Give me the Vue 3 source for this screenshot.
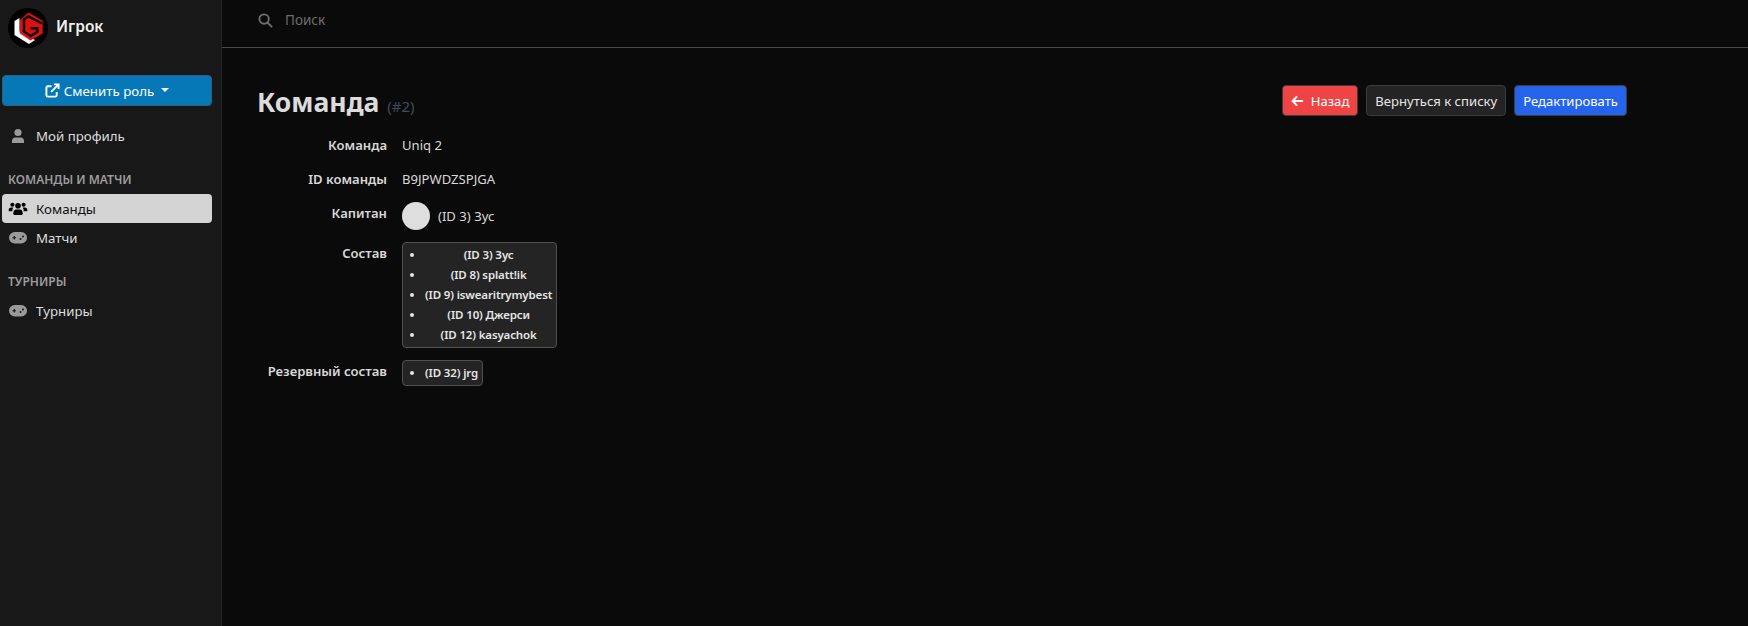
<script setup>
const rows = [
  { id: 3, name: 'Зус' },
  { id: 8, name: 'splatt!ik' },
  { id: 9, name: 'iswearitrymybest' },
  { id: 10, name: 'Джерси' },
  { id: 12, name: 'kasyachok' }
]
const reserve = [{ id: 32, name: 'jrg' }]
</script>

<template>
  <div class="page">
    <aside class="sidebar">
      <div class="brand">
        <svg class="logo" viewBox="0 0 40 40" width="40" height="40">
          <circle cx="20" cy="20" r="20" fill="#000" />
          <path d="M11.500 10 L6.500 13 V27 L21 36 L27 32 L11.500 23.500 Z" fill="#fff" />
          <path d="M20.500 4.500 L34.700 12.700 V25.500 L22.500 32.500 L12 25.500 V12 Z" fill="#e01010" />
          <path d="M34 15.500 L20.500 8.500 L16 11.300 V23.700 L22.700 28 L29.500 23.700 V20.300 L22.500 20.300" fill="none" stroke="#000" stroke-width="2.400" />
        </svg>
        <span class="brand-name">Игрок</span>
      </div>
      <button class="role-btn">
        <svg viewBox="0 0 16 16" width="15" height="15" fill="none" stroke="#fff" stroke-width="2">
          <path d="M12.500 9.500 V13 a1.500 1.500 0 0 1 -1.500 1.500 H3 A1.500 1.500 0 0 1 1.500 13 V5 A1.500 1.500 0 0 1 3 3.500 H7" />
          <path d="M6.500 9.500 L14 2 M9.500 1.500 H14.500 V6.500" />
        </svg>
        <span>Сменить роль</span>
        <i class="caret"></i>
      </button>
      <a class="nav-item">
        <svg class="nav-icon" viewBox="0 0 16 16" width="16" height="16" fill="#9a9a9a">
          <circle cx="8" cy="4.500" r="3.600" />
          <path d="M2 15 V12.500 A3.500 3.500 0 0 1 5.500 9.500 H10.500 A3.500 3.500 0 0 1 14 12.500 V15 Z" />
        </svg>
        Мой профиль
      </a>
      <div class="section">Команды и матчи</div>
      <a class="nav-item active">
        <svg class="nav-icon" viewBox="0 0 20 16" width="18" height="15" fill="#000">
          <circle cx="4" cy="4" r="2.200" />
          <circle cx="16" cy="4" r="2.200" />
          <circle cx="10" cy="5" r="3" />
          <path d="M0 10 Q0 7 3 7 H5 Q3.500 9 4 11 H1 Q0 11 0 10 Z" />
          <path d="M20 10 Q20 7 17 7 H15 Q16.500 9 16 11 H19 Q20 11 20 10 Z" />
          <path d="M5 13.500 Q5 9 8 9 H12 Q15 9 15 13.500 Q15 15 13.500 15 H6.500 Q5 15 5 13.500 Z" />
        </svg>
        Команды
      </a>
      <a class="nav-item">
        <svg class="nav-icon" viewBox="0 0 18 12" width="18" height="12">
          <rect width="18" height="11.500" rx="5.700" fill="#9a9a9a" />
          <path d="M3.500 5.750 H7 M5.250 4 V7.500" stroke="#181818" stroke-width="1.200" />
          <circle cx="11.500" cy="7" r="1" fill="#181818" />
          <circle cx="14" cy="4.500" r="1" fill="#181818" />
        </svg>
        Матчи
      </a>
      <div class="section section-second">Турниры</div>
      <a class="nav-item">
        <svg class="nav-icon" viewBox="0 0 18 12" width="18" height="12">
          <rect width="18" height="11.500" rx="5.700" fill="#9a9a9a" />
          <path d="M3.500 5.750 H7 M5.250 4 V7.500" stroke="#181818" stroke-width="1.200" />
          <circle cx="11.500" cy="7" r="1" fill="#181818" />
          <circle cx="14" cy="4.500" r="1" fill="#181818" />
        </svg>
        Турниры
      </a>
    </aside>

    <main class="main">
      <header class="topbar">
        <svg viewBox="0 0 16 16" width="15" height="15" fill="none" stroke="#6f6f6f" stroke-width="2">
          <circle cx="6.500" cy="6.500" r="5" />
          <path d="M10.200 10.200 L15 15" />
        </svg>
        <span class="search">Поиск</span>
      </header>

      <div class="content">
        <div class="head">
          <h1>Команда <small>(#2)</small></h1>
          <div class="actions">
            <button class="btn red">
              <svg viewBox="0 0 14 12" width="13" height="12" fill="none" stroke="#fff" stroke-width="2.200">
                <path d="M13 6 H2 M6.500 1 L1.800 6 L6.500 11" />
              </svg>
              Назад
            </button>
            <button class="btn dark">Вернуться к списку</button>
            <button class="btn blue">Редактировать</button>
          </div>
        </div>

        <dl class="details">
          <dt>Команда</dt>
          <dd>Uniq 2</dd>
          <dt>ID команды</dt>
          <dd>B9JPWDZSPJGA</dd>
          <dt>Капитан</dt>
          <dd class="captain"><span class="avatar"></span>(ID 3) Зус</dd>
          <dt>Состав</dt>
          <dd>
            <ul class="players">
              <li v-for="p in rows" :key="p.id">(ID {{ p.id }}) {{ p.name }}</li>
            </ul>
          </dd>
          <dt>Резервный состав</dt>
          <dd>
            <ul class="players">
              <li v-for="p in reserve" :key="p.id">(ID {{ p.id }}) {{ p.name }}</li>
            </ul>
          </dd>
        </dl>
      </div>
    </main>
  </div>
</template>

<style>
body {
  background: #0a0a0a;
}
</style>

<style scoped>
.page {
  display: flex;
  height: 626px;
  overflow: hidden;
  font-family: "Noto Sans", "Open Sans", sans-serif;
  font-size: 13.300px;
  color: #e0e0e0;
  background: #0a0a0a;
}
.sidebar {
  width: 222px;
  flex-shrink: 0;
  padding: 0 9px 0 2px;
  box-sizing: border-box;
  background: #181818;
  border-right: 1px solid #262626;
}
.brand {
  display: flex;
  align-items: center;
  gap: 8px;
  height: 56px;
  padding-left: 6px;
}
.brand-name {
  margin-bottom: 4px;
  font-size: 15.500px;
  font-weight: 600;
  color: #f0f0f0;
}
.role-btn {
  display: flex;
  align-items: center;
  justify-content: center;
  gap: 4px;
  width: 100%;
  height: 31px;
  margin-top: 19px;
  padding: 0;
  font: inherit;
  color: #fff;
  background: #0678b8;
  border: 1px solid #2a6080;
  border-radius: 4px;
}
.caret {
  width: 0;
  height: 0;
  margin-left: 3px;
  margin-bottom: 2px;
  border-left: 4px solid transparent;
  border-right: 4px solid transparent;
  border-top: 4px solid #fff;
}
.nav-item {
  display: flex;
  align-items: center;
  height: 29px;
  padding-left: 6px;
  border-radius: 4px;
  color: #dedede;
}
.nav-item:first-of-type {
  margin-top: 15px;
}
.nav-icon {
  width: 20px;
  margin-right: 8px;
}
.active {
  background: #d4d4d4;
  color: #111;
}
.section {
  margin-top: 22px;
  margin-bottom: 6px;
  padding-left: 6px;
  font-size: 12px;
  font-weight: 600;
  line-height: 16px;
  text-transform: uppercase;
  color: #9c9c9c;
}
.section-second {
  margin-top: 22px;
  margin-bottom: 6px;
}
.main {
  flex: 1;
  min-width: 0;
}
.topbar {
  display: flex;
  align-items: center;
  gap: 12px;
  height: 48px;
  padding: 0 0 7px 36px;
  box-sizing: border-box;
  border-bottom: 1px solid #4a4a4a;
}
.search {
  font-size: 13.500px;
  color: #6d6d6d;
}
.content {
  width: 1370px;
  margin-left: 35px;
}
.head {
  display: flex;
  justify-content: space-between;
  align-items: flex-start;
  padding-top: 37px;
}
h1 {
  margin: -2px 0 0;
  font-size: 26.500px;
  line-height: 38px;
  font-weight: 700;
  color: #dcdcdc;
}
h1 small {
  margin-left: 1px;
  font-size: 15px;
  font-weight: 400;
  color: #3f4a5c;
}
.actions {
  display: flex;
  gap: 8px;
}
.btn {
  display: flex;
  align-items: center;
  gap: 7px;
  height: 31px;
  padding: 0 8px;
  font: inherit;
  font-size: 13.100px;
  color: #fff;
  border: 1px solid #3c3c3c;
  border-radius: 4px;
}
.red { background: #f04444; }
.dark { background: #242424; color: #e6e6e6; }
.blue { background: #2563eb; }
.details {
  display: grid;
  grid-template-columns: 130px auto;
  column-gap: 15px;
  row-gap: 12px;
  justify-content: start;
  align-items: start;
  margin: 9px 0 0;
}
dt {
  font-weight: 600;
  font-size: 13.100px;
  line-height: 22px;
  text-align: right;
  color: #d8d8d8;
}
dd {
  margin: 0;
  font-size: 13.100px;
  line-height: 22px;
  color: #d8d8d8;
}
.captain {
  display: flex;
  align-items: center;
  gap: 8px;
}
.avatar {
  width: 28px;
  height: 28px;
  border-radius: 50%;
  background: #dedede;
}
.players {
  width: fit-content;
  margin: 0;
  padding: 2px 4px 2px 22px;
  font-size: 11.500px;
  letter-spacing: -0.140px;
  font-weight: 600;
  line-height: 20px;
  text-align: center;
  color: #e6e6e6;
  background: #242424;
  border: 1px solid #505050;
  border-radius: 4px;
}
</style>
